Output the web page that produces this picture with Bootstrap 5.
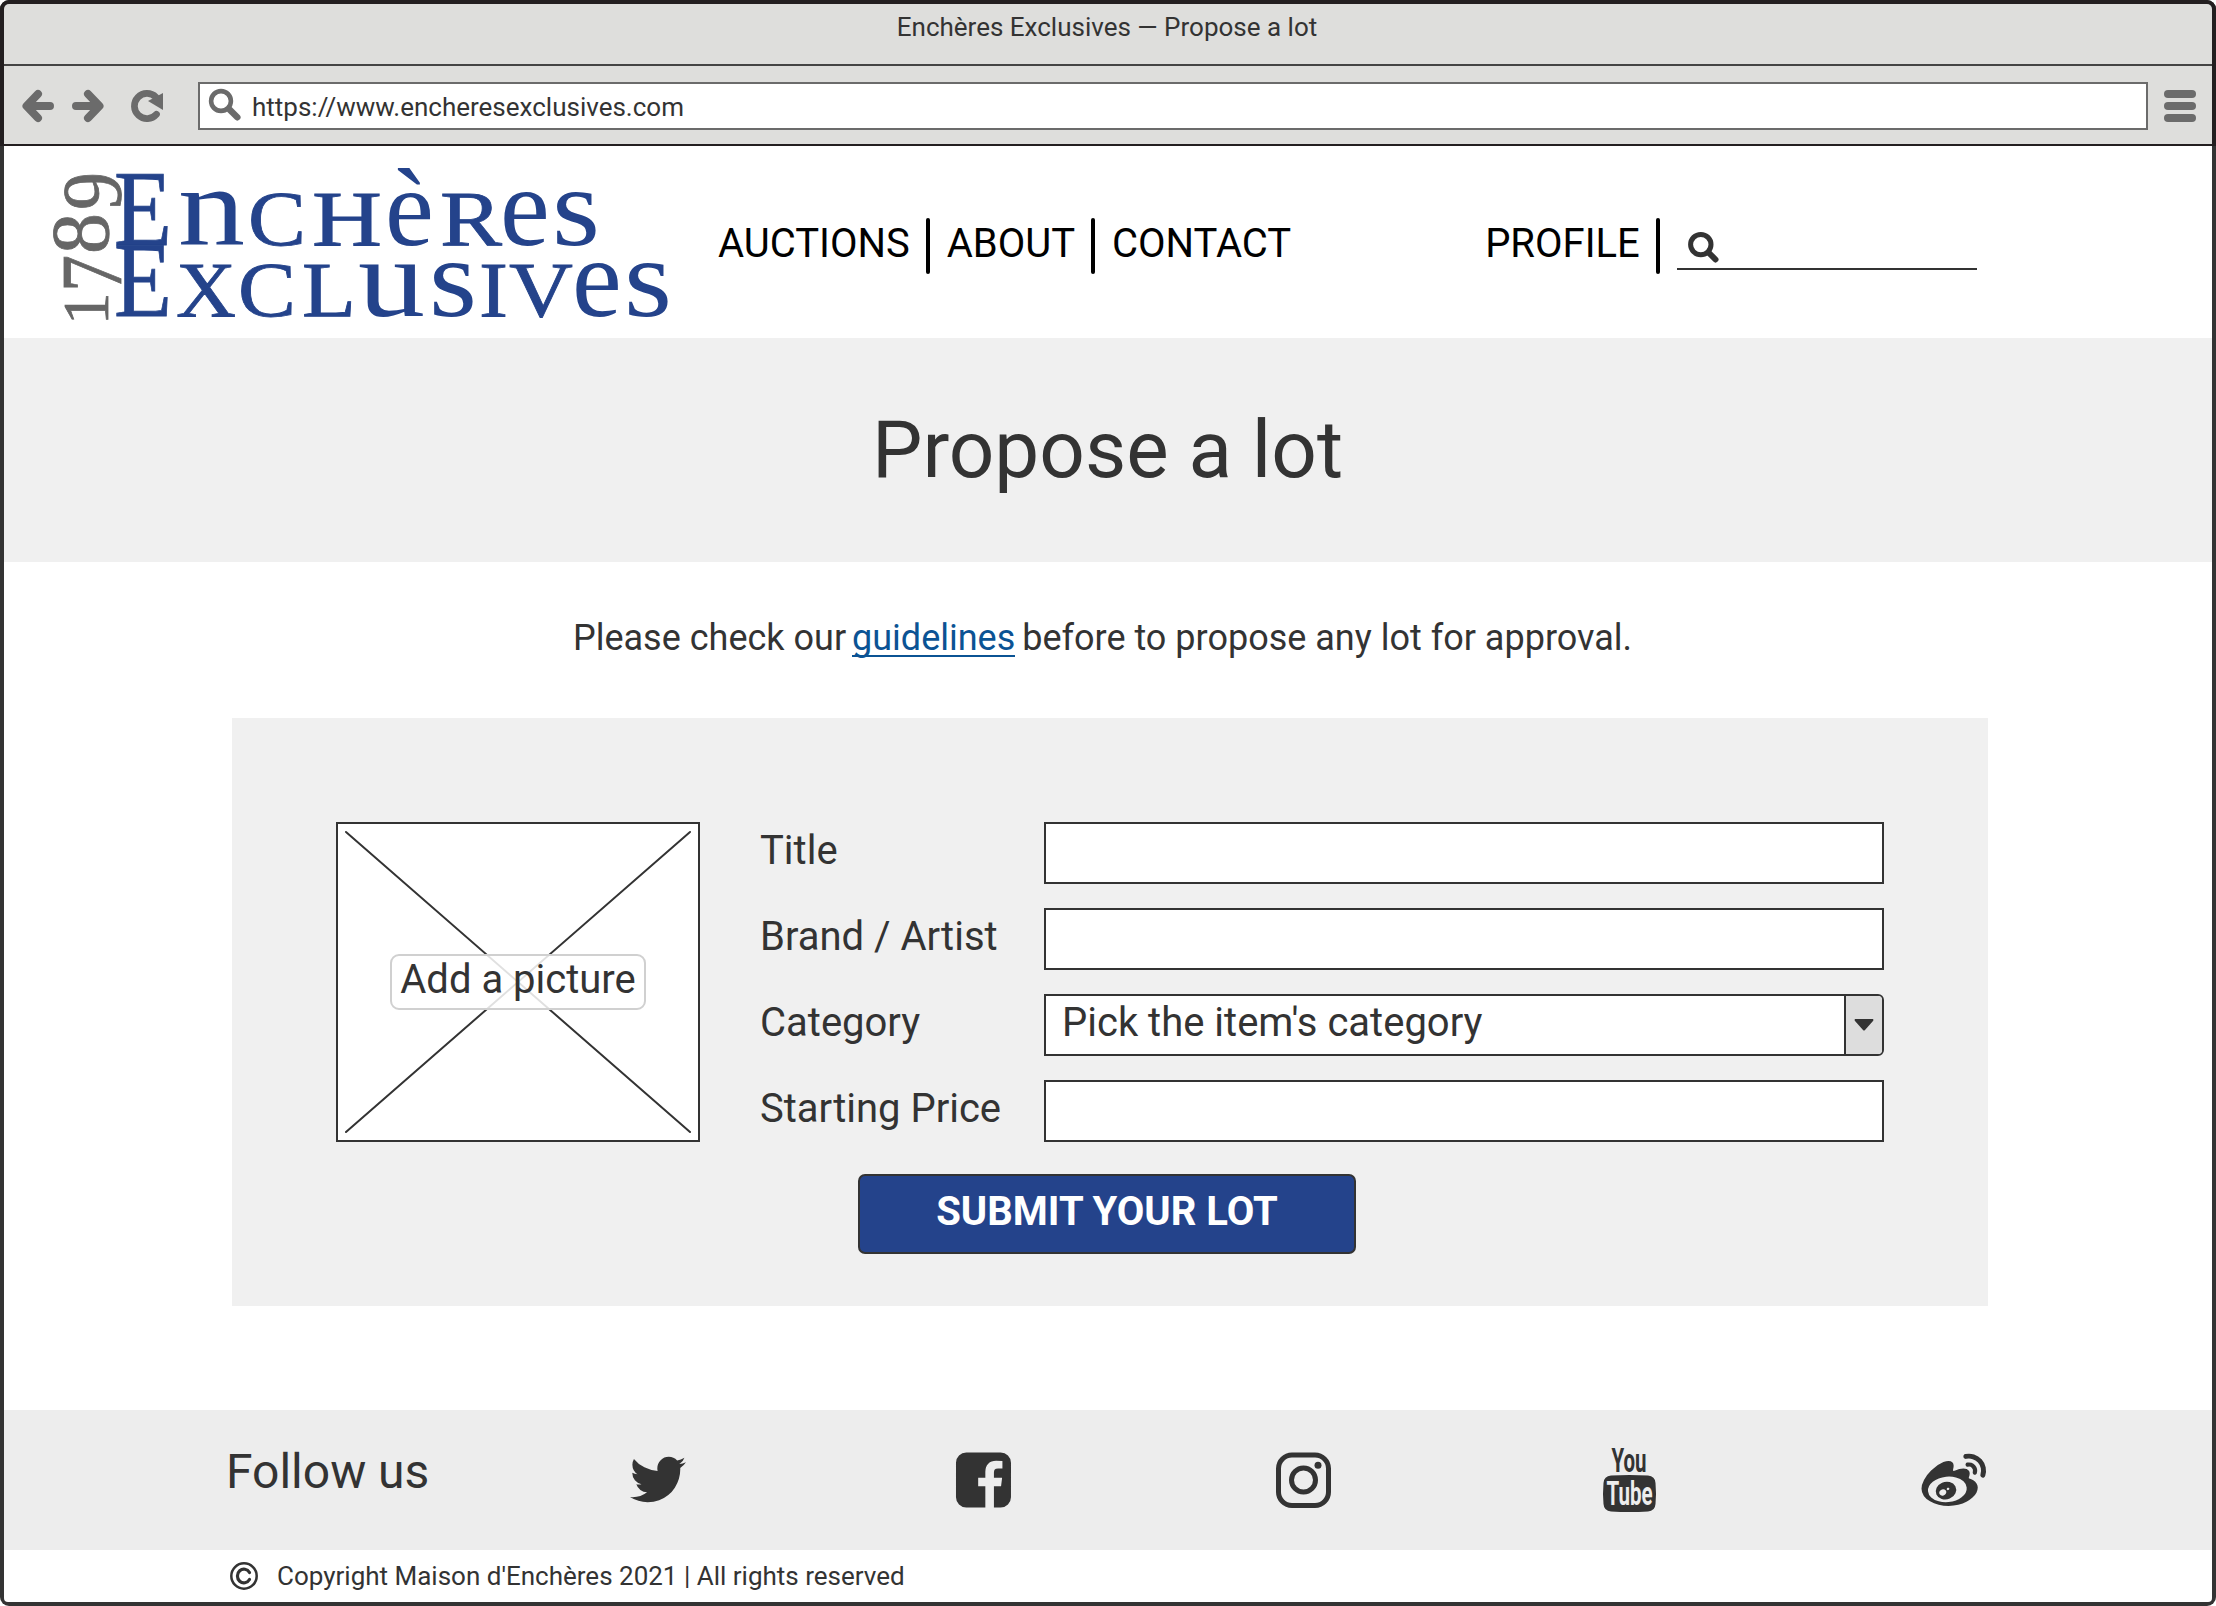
<!DOCTYPE html>
<html lang="en">
<head>
<meta charset="utf-8">
<title>Enchères Exclusives — Propose a lot</title>
<meta name="viewport" content="width=device-width, initial-scale=1">
<link href="https://cdn.jsdelivr.net/npm/bootstrap@5.3.0/dist/css/bootstrap.min.css" rel="stylesheet">
<style>
  body { font-family: Roboto, "Liberation Sans", sans-serif; color: #333; background: #fff; }
  svg { display: block; flex: none; overflow: visible; }
  .browser { width: 2216px; height: 1606px; background: #333; padding: 0 4px 4px; border-radius: 9px; overflow: hidden; }
  .chrome-top { background: #231f20; margin: 0 -4px; padding: 4px 4px 0; }
  .titlebar { height: 62px; background: #dededc; border-bottom: 2px solid #444; border-radius: 5px 5px 0 0; font-size: 26px; line-height: 47px; padding-right: 2px; }
  .toolbar { height: 80px; background: #dededc; border-bottom: 2px solid #231f20; padding: 16px 16px 14px 18px; }
  .address { width: 1950px; height: 48px; margin-left: 34px; border: 2px solid #6b6b6b; background: #fff; font-size: 26px; line-height: 44px; padding-left: 8px; }
  .address span { margin-left: 10px; padding-top: 1px; }
  .burger { width: 32px; margin-left: 16px; gap: 4px; }
  .burger span { height: 8px; border-radius: 4px; background: #6b6b6b; }
  .page-body { background: #fff; border-radius: 0 0 4px 4px; height: 1456px; }
  .site-head { height: 192px; }
  .site-head .cap { stroke: #24438b; stroke-width: .8px; }
  .site-nav { font-size: 40px; line-height: 62px; color: #000; margin-top: 67px; height: 62px; }
  .site-nav a { color: #000; text-decoration: none; }
  .site-nav .divider { width: 4px; height: 56px; background: #000; border-radius: 3px; margin: 5px 17px 0 16px; }
  .profile-nav { margin-left: 194px; }
  .finder { width: 300px; height: 57px; border-bottom: 2px solid #333; padding: 19px 0 0 11px; }
  .hero { height: 224px; background: #f0f0f0; }
  .hero h1 { font-size: 80px; line-height: 224px; font-weight: 400; margin: 0; padding-right: 1px; }
  .intro { font-size: 36px; line-height: 50px; margin: 51px 0 0; height: 105px; padding-right: 11px; }
  .intro a { color: #0b5394; text-decoration: none; border-bottom: 2px solid #0b5394; display: inline-block; height: 44px; margin: 0 -2px 0 -3px; }
  .lot-panel { width: 1756px; height: 588px; margin-left: 228px; background: #f0f0f0; padding: 104px 104px 0; }
  .lot-photo { width: 364px; height: 320px; }
  .lot-photo .caption-btn { left: 54px; top: 132px; width: 256px; height: 56px; border: 2px solid #d0d0d0; border-radius: 9px; background: rgba(255,255,255,.85); font-size: 40px; line-height: 46px; color: #333; padding: 0 0 5px; }
  .lot-fields { margin-left: 60px; gap: 24px; width: 1124px; }
  .lot-fields label { width: 284px; font-size: 40px; line-height: 58px; }
  .lot-fields .field-box { width: 840px; height: 62px; border: 2px solid #333; border-radius: 0; background: #fff; padding: 0; }
  .lot-fields .picker { border-radius: 0 6px 6px 0; overflow: hidden; font-size: 40px; line-height: 54px; }
  .picker .choice { padding-left: 16px; }
  .picker .arrow { width: 38px; background: #ddd; border-left: 2px solid #333; }
  .submit-btn { width: 498px; height: 80px; margin: 32px 0 0 522px; background: #24438b; border: 2px solid #333; border-radius: 7px; color: #fff; font-size: 40px; font-weight: 700; line-height: 60px; padding: 0 0 5px; }
  .social { margin-top: 104px; height: 140px; background: #ededed; padding-left: 222px; }
  .social h2 { font-size: 48px; line-height: 62px; font-weight: 400; margin: 31px 0 0; width: 400px; }
  .legal { height: 52px; font-size: 26px; line-height: 54px; padding-left: 225px; }
</style>
</head>
<body>
<div class="browser">
  <div class="chrome-top">
    <div class="titlebar text-center">Enchères Exclusives — Propose a lot</div>
    <div class="toolbar d-flex align-items-center">
      <svg width="142" height="48" viewBox="22 82 142 48" fill="none" stroke="#6b6b6b" stroke-width="8" stroke-linecap="round" stroke-linejoin="round">
        <path d="M28 106H50M38 94L26.500 106L38 118"/>
        <path d="M76 106H98M88 94L99.500 106L88 118"/>
        <path d="M155.900 97.100A12.600 12.600 0 1 0 156.500 114.300" stroke-width="6.700"/>
        <path d="M163 93V110L148 101Z" fill="#6b6b6b" stroke="none"/>
      </svg>
      <div class="address d-flex align-items-center">
        <svg width="34" height="36" viewBox="208 89 34 36" fill="none" stroke="#6b6b6b">
          <circle cx="221" cy="102" r="9.900" stroke-width="4.600"/>
          <path d="M229.500 110.500L237.300 118.300" stroke-width="6.500" stroke-linecap="round"/>
        </svg>
        <span>https://www.encheresexclusives.com</span>
      </div>
      <div class="burger d-flex flex-column"><span></span><span></span><span></span></div>
    </div>
  </div>

  <div class="page-body">
    <header class="site-head d-flex">
      <svg width="714" height="192" viewBox="4 146 714 192" font-family="'Liberation Serif', serif">
        <g transform="translate(107.600 318) rotate(-90)" fill="#666" stroke="#666" stroke-width=".8">
          <text y="0"><tspan x="-7" font-size="65">1</tspan><tspan x="26" y="13" font-size="87" textLength="37" lengthAdjust="spacingAndGlyphs">7</tspan><tspan x="64" y="0" font-size="82">8</tspan><tspan x="108" y="13" font-size="84" textLength="38" lengthAdjust="spacingAndGlyphs">9</tspan></text>
        </g>
        <g fill="#24438b">
          <text y="245"><tspan class="cap" x="114" font-size="107" textLength="58" lengthAdjust="spacingAndGlyphs">E</tspan><tspan x="178" font-size="112" textLength="67" lengthAdjust="spacingAndGlyphs">n</tspan><tspan class="cap" x="248" font-size="78" textLength="58" lengthAdjust="spacingAndGlyphs">C</tspan><tspan class="cap" x="312" font-size="79" textLength="70" lengthAdjust="spacingAndGlyphs">H</tspan><tspan x="385" font-size="110">è</tspan><tspan class="cap" x="440" font-size="79" textLength="62" lengthAdjust="spacingAndGlyphs">R</tspan><tspan x="500" font-size="112">e</tspan><tspan x="552" font-size="112" textLength="48" lengthAdjust="spacingAndGlyphs">s</tspan></text>
          <text y="316"><tspan class="cap" x="114" font-size="107" textLength="58" lengthAdjust="spacingAndGlyphs">E</tspan><tspan class="cap" x="176" font-size="79" textLength="60" lengthAdjust="spacingAndGlyphs">X</tspan><tspan class="cap" x="238" font-size="78" textLength="58" lengthAdjust="spacingAndGlyphs">C</tspan><tspan class="cap" x="302" font-size="79" textLength="54" lengthAdjust="spacingAndGlyphs">L</tspan><tspan x="358" font-size="112" textLength="67" lengthAdjust="spacingAndGlyphs">u</tspan><tspan x="429" font-size="112" textLength="48" lengthAdjust="spacingAndGlyphs">s</tspan><tspan class="cap" x="479" font-size="79" textLength="29" lengthAdjust="spacingAndGlyphs">I</tspan><tspan class="cap" x="509" font-size="79" textLength="64" lengthAdjust="spacingAndGlyphs">V</tspan><tspan x="572" font-size="112">e</tspan><tspan x="624" font-size="112" textLength="48" lengthAdjust="spacingAndGlyphs">s</tspan></text>
        </g>
      </svg>
      <nav class="site-nav d-flex">
        <a href="#">AUCTIONS</a><span class="divider"></span><a href="#">ABOUT</a><span class="divider ms-3"></span><a href="#">CONTACT</a>
      </nav>
      <nav class="site-nav profile-nav d-flex">
        <a href="#">PROFILE</a><span class="divider"></span>
        <div class="finder">
          <svg width="32" height="32" viewBox="0 0 32 32" fill="none" stroke="#333">
            <circle cx="12.800" cy="12.600" r="10.200" stroke-width="5"/>
            <path d="M20.500 20.500L27.500 27.500" stroke-width="6" stroke-linecap="round"/>
          </svg>
        </div>
      </nav>
    </header>

    <section class="hero text-center"><h1>Propose a lot</h1></section>

    <p class="intro text-center">Please check our <a href="#">guidelines</a> before to propose any lot for approval.</p>

    <form class="lot-panel">
      <div class="d-flex">
        <div class="lot-photo position-relative">
          <svg width="364" height="320" viewBox="0 0 364 320">
            <rect x="1" y="1" width="362" height="318" fill="#fff" stroke="#333" stroke-width="2"/>
            <path d="M10 10L354 310M354 10L10 310" stroke="#333" stroke-width="2" stroke-linecap="round"/>
          </svg>
          <button type="button" class="caption-btn position-absolute">Add a picture</button>
        </div>
        <div class="lot-fields d-flex flex-column">
          <div class="d-flex"><label for="f1">Title</label><input id="f1" class="form-control field-box"></div>
          <div class="d-flex"><label for="f2">Brand / Artist</label><input id="f2" class="form-control field-box"></div>
          <div class="d-flex"><label>Category</label>
            <div class="field-box picker d-flex justify-content-between"><span class="choice">Pick the item's category</span>
              <span class="arrow d-flex align-items-center justify-content-center"><svg width="20" height="12" viewBox="0 0 20 12"><path d="M1 0H19Q20 1 19 2L11 11Q10 12 9 11L1 2Q0 1 1 0Z" fill="#333"/></svg></span>
            </div>
          </div>
          <div class="d-flex"><label for="f4">Starting Price</label><input id="f4" class="form-control field-box"></div>
        </div>
      </div>
      <button type="button" class="submit-btn d-block">SUBMIT YOUR LOT</button>
    </form>

    <footer>
      <div class="social d-flex">
        <h2>Follow us</h2>
        <svg width="64" height="140" viewBox="626 1410 64 140"><path transform="translate(626.200 1447.700) scale(.0355)" fill="#333" d="M1684 408q-67 98-162 167 1 14 1 42 0 130-38 259.500t-115.500 248.500-184.500 210.500-258 146-323 54.500q-271 0-496-145 35 4 78 4 225 0 401-138-105-2-188-64.500t-114-159.500q33 5 61 5 43 0 85-11-112-23-185.500-111.500t-73.500-205.500v-4q68 38 146 41-66-44-105-115t-39-154q0-88 44-163 121 149 294.500 238.500t371.500 99.500q-8-38-8-74 0-134 94.500-228.500t228.500-94.500q140 0 236 102 109-21 205-78-37 115-142 178 93-10 186-50z"/></svg>
        <svg width="64" height="140" viewBox="952 1410 64 140" style="margin-left:262px"><path transform="translate(951.400 1447.900) scale(.0358)" fill="#333" d="M1376 128q119 0 203.500 84.500t84.500 203.500v960q0 119-84.500 203.500t-203.500 84.500h-188v-595h199l30-232h-229v-148q0-56 23.500-84t91.500-28l122-1v-207q-63-9-178-9-136 0-217.500 80t-81.500 226v171h-200v232h200v595h-532q-119 0-203.500-84.500t-84.500-203.500v-960q0-119 84.500-203.500t203.500-84.500h960z"/></svg>
        <svg width="64" height="140" viewBox="1272 1410 64 140" style="margin-left:256px" fill="none" stroke="#333" stroke-width="5"><rect x="1278.500" y="1455" width="50" height="50.500" rx="13.500"/><circle cx="1303.500" cy="1480" r="12"/><circle cx="1318" cy="1465.300" r="3.500" fill="#333" stroke="none"/></svg>
        <svg width="64" height="140" viewBox="1598 1410 64 140" style="margin-left:262px" font-family="Roboto, sans-serif" font-size="34"><text x="1611.500" y="1472" font-weight="700" fill="#333" textLength="35" lengthAdjust="spacingAndGlyphs">You</text><path d="M1611 1475.500Q1629.500 1474.500 1648 1475.500Q1655 1476 1655.500 1483Q1656.500 1494 1655.500 1504Q1655 1511 1648 1511.500Q1629.500 1512.500 1611 1511.500Q1604 1511 1603.500 1504Q1602.500 1494 1603.500 1483Q1604 1476 1611 1475.500Z" fill="#333"/><text x="1606.500" y="1505" font-weight="700" fill="#ededed" textLength="46" lengthAdjust="spacingAndGlyphs">Tube</text></svg>
        <svg width="68" height="140" viewBox="1920 1410 68 140" style="margin-left:258px"><path transform="translate(1921.500 1447.500) scale(.036)" fill="#333" d="M675 1284q21-34 11-69t-45-50q-34-14-73-1t-60 46q-22 34-13 68.500t43 50.500 74.500 2.500 62.500-47.500zm94-121q8-13 3.500-26.500t-17.500-18.500q-14-5-28.500.5t-21.500 18.500q-17 31 13 45 14 5 29-.5t22-18.500zm174 107q-45 102-158 150t-224 12q-107-34-147.500-126.500t6.500-187.500q47-93 151.500-139t210.500-19q111 29 158.500 119.500t2.500 190.500zm312-160q-9-96-89-170t-208.500-109-274.500-21q-223 23-369.500 141.500t-132.500 264.500q9 96 89 170t208.500 109 274.500 21q223-23 369.500-141.500t132.500-264.500zm308 4q0 68-37 139.500t-109 137-168.500 117.500-226 83-270.500 31-275-33.500-240.500-93-171.500-151-65-199.500q0-115 69.500-245t197.500-258q169-169 341.500-236t246.500 7q65 64 20 209-4 14-1 20t10 7 14.500-.5 13.500-3.500l6-2q139-59 246-59t153 61q45 63 0 178-2 13-4.500 20t4.500 12.500 12 7.500 17 6q57 18 103 47t80 81.500 34 116.500zm-74-624q42 47 54.500 108.500t-6.500 117.500q-8 23-29.500 34t-44.500 4q-23-8-34-29.500t-4-44.500q20-63-24-111t-107-35q-24 5-45-8t-25-37q-5-24 8-44.500t37-25.500q60-13 119 5.500t101 65.500zm181-163q87 96 112.500 222.500t-13.500 241.500q-9 27-34 40t-52 4-40-34-5-52q28-82 10-172t-80-158q-62-69-148-95.500t-173-8.500q-28 6-52-9.500t-30-43.500 9.500-51.500 43.500-29.500q123-26 244 11.500t208 134.500z"/></svg>
      </div>
      <div class="legal d-flex align-items-center">
        <svg width="30" height="30" viewBox="0 0 30 30" fill="none" stroke="#333"><circle cx="15" cy="15" r="12.700" stroke-width="2.500"/><path d="M20.500 11.500A6.500 6.800 0 1 0 20.500 18.500" stroke-width="3.200" stroke-linecap="round"/></svg>
        <span style="margin-left:18px">Copyright Maison d'Enchères 2021 | All rights reserved</span>
      </div>
    </footer>
  </div>
</div>
<script src="https://cdn.jsdelivr.net/npm/bootstrap@5.3.0/dist/js/bootstrap.bundle.min.js"></script>
</body>
</html>
